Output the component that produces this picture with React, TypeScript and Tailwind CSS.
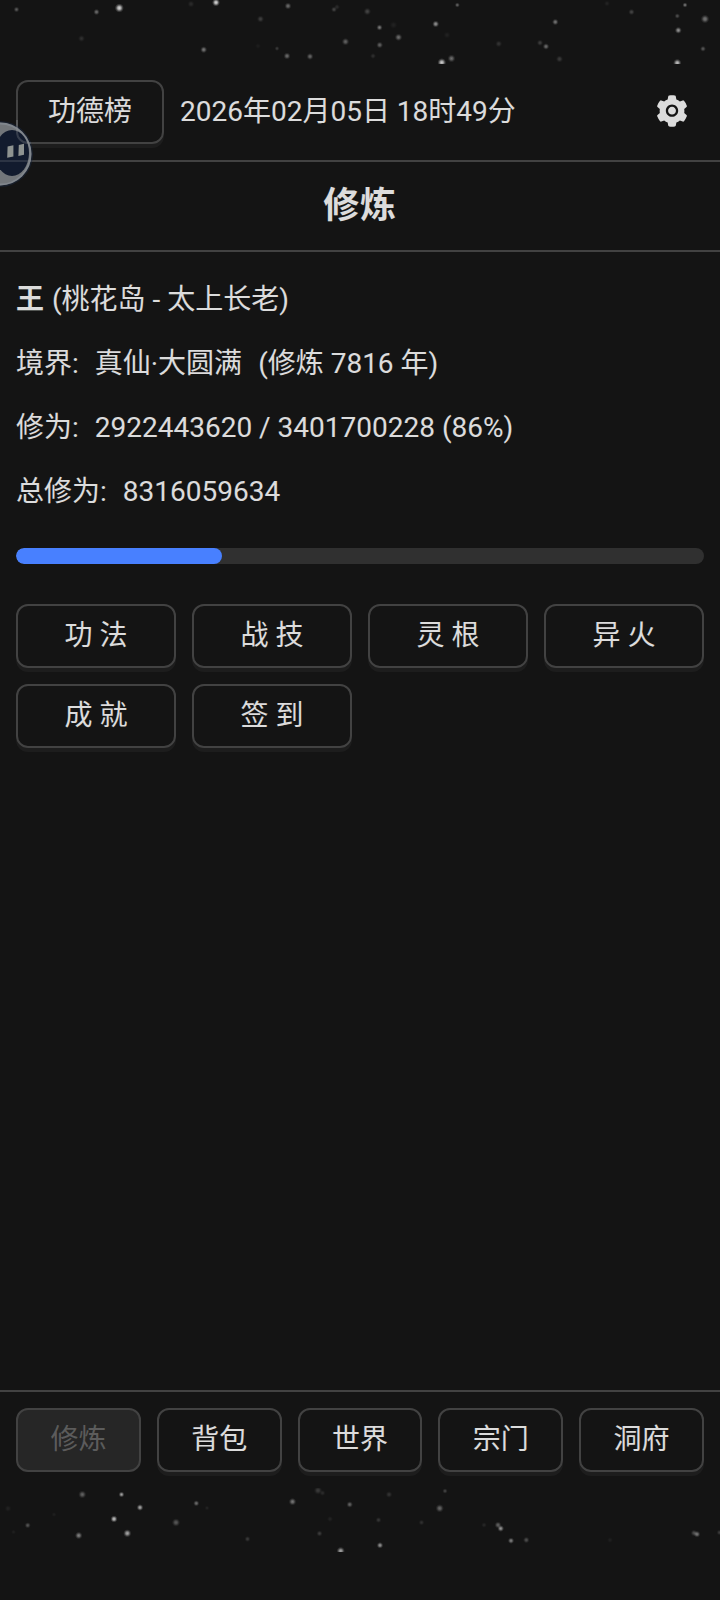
import { useState } from 'react';
import { AiFillSetting } from 'react-icons/ai';

// x, y, radius, brightness
type Star = [number, number, number, number];

const topStars: Star[] = [
    [16.5, 9.5, 3, 0.35], [96.5, 12, 3.2, 0.45], [119.3, 8, 4.6, 1], [81.5, 38.5, 3.5, 0.14],
    [191, 4, 3.5, 0.12], [216, 2.5, 4, 1], [203.7, 49.7, 3.5, 0.5], [260.5, 19, 3.6, 0.22],
    [288, 6, 3.5, 0.45], [277, 48.5, 2.5, 0.2], [287, 56, 3.5, 0.45], [310, 56.5, 3.5, 0.42],
    [334, 9.5, 3, 0.25], [337, 7, 3, 0.12], [345.5, 41.7, 3.8, 0.4], [258, 46, 3, 0.05],
    [367.3, 11.5, 3.8, 0.25], [379.5, 27.5, 3.2, 0.5], [398.5, 37.3, 3.8, 0.45], [379.7, 45, 3.4, 0.4],
    [373, 56, 3, 0.14], [393.5, 25, 4, 0.07], [435.7, 24, 3.5, 0.65], [457.3, 5, 2.6, 0.4],
    [447, 35, 3.5, 0.07], [441.8, 62.5, 4.4, 0.95], [451.5, 58.5, 4, 0.45], [498.7, 43.8, 3.5, 0.16],
    [555.3, 22, 3.3, 0.5], [540, 42.8, 3.2, 0.22], [546, 46.5, 3.3, 0.45], [559.5, 59, 3.6, 0.2],
    [607, 3.5, 3, 0.08], [631.5, 12, 3.2, 0.25], [685, 5, 2.6, 0.5], [677.3, 16, 2.8, 0.3],
    [678.3, 30.3, 3.5, 0.65], [705, 19, 4.4, 0.5], [703, 48.8, 3, 0.35], [677.3, 63, 4.2, 0.9],
];

const bottomStars: Star[] = [
    [8, 20.5, 3.5, 0.07], [27.7, 37.3, 3.1, 0.33], [13.5, 44, 2.5, 0.06], [82.3, 6.5, 4, 0.4],
    [54, 26.5, 2.5, 0.06], [121.5, 6.5, 3, 0.7], [140, 19.5, 3.4, 0.75], [114, 31, 3.6, 0.9],
    [78.7, 47.5, 3.8, 0.55], [127.3, 45.3, 4.1, 0.75], [196.3, 15.3, 3.1, 0.45], [207, 20, 2.5, 0.08],
    [176, 34.5, 4.2, 0.35], [247.5, 51, 3, 0.2], [292.5, 13.7, 3.8, 0.5], [318, 2.5, 4.2, 0.2],
    [322.5, 5, 3, 0.12], [349.7, 16.5, 3.3, 0.4], [330, 31, 3, 0.08], [319.5, 45.5, 3.2, 0.2],
    [340.7, 63, 4.2, 0.75], [389, 6.5, 3.4, 0.16], [445, 3, 2.7, 0.25], [439.7, 20.3, 4.2, 0.42],
    [378.5, 32, 3, 0.18], [421.5, 34.5, 3, 0.14], [380, 57.3, 3.3, 0.65], [484, 37, 2.8, 0.1],
    [498, 37, 3.5, 0.4], [500.7, 40.5, 3.4, 0.65], [511, 52.7, 3.2, 0.55], [526.3, 52, 3.3, 0.3],
    [610, 52, 3, 0.06], [694, 45, 3.3, 0.3], [697, 46.2, 3.4, 0.5], [719.5, 44.5, 3, 0.2],
];

function StarStrip({ id, stars }: { id: string; stars: Star[] }) {
    return (
        <svg className="block h-16 w-full shrink-0" viewBox="0 0 720 64">
            <defs>
                <radialGradient id={id}>
                    <stop offset="0" stopColor="#fff" stopOpacity="0.95" />
                    <stop offset="0.35" stopColor="#fff" stopOpacity="0.7" />
                    <stop offset="0.7" stopColor="#fff" stopOpacity="0.22" />
                    <stop offset="1" stopColor="#fff" stopOpacity="0" />
                </radialGradient>
            </defs>
            {stars.map(([x, y, r, o]) => (
                <circle key={`${x}-${y}`} cx={x} cy={y} r={r} opacity={o * 0.9} fill={`url(#${id})`} />
            ))}
        </svg>
    );
}

const actions = ['功 法', '战 技', '灵 根', '异 火', '成 就', '签 到'];
const tabs = ['修炼', '背包', '世界', '宗门', '洞府'];

const buttonClass =
    'h-16 rounded-xl border-2 border-[#424242] text-center enabled:shadow-[0_4px_0_rgba(255,255,255,0.04)] disabled:bg-white/8 disabled:text-white/25';

export default function App() {
    const [tab, setTab] = useState('修炼');
    const progress = 30;

    return (
        <div className="relative flex h-[1600px] w-[720px] flex-col overflow-hidden bg-[#141414] font-[Roboto,'Noto_Sans_CJK_SC',sans-serif] text-[28px] leading-[44px] text-white/85">
            <StarStrip id="star-top" stars={topStars} />

            {/* Header */}
            <header className="flex h-[98px] shrink-0 items-center gap-4 border-b-2 border-[#424242] px-4">
                <button className={`${buttonClass} w-[148px]`}>功德榜</button>
                <span>2026年02月05日 18时49分</span>
                <button className="ml-auto flex size-16 items-center justify-center pb-0.5">
                    <AiFillSetting className="size-9" />
                </button>
            </header>

            <h1 className="flex h-[90px] shrink-0 items-center justify-center border-b-2 border-[#424242] text-[36px] font-bold tracking-[0.75px]">
                {tab}
            </h1>

            {/* Character */}
            <main className="flex grow flex-col px-4 pt-[26px]">
                <div className="flex flex-col gap-5">
                    <p>
                        <strong className="tracking-[1px]">王</strong> (桃花岛 - 太上长老)
                    </p>
                    <p className="flex gap-4">
                        <span>境界:</span>
                        <span>真仙·大圆满</span>
                        <span>(修炼 7816 年)</span>
                    </p>
                    <p className="flex gap-4">
                        <span>修为:</span>
                        <span>2922443620 / 3401700228 (86%)</span>
                    </p>
                    <p className="flex gap-4">
                        <span>总修为:</span>
                        <span>8316059634</span>
                    </p>
                </div>

                <div className="mt-[34px] h-4 overflow-hidden rounded-full bg-[#303030]">
                    <div className="h-full rounded-full bg-[#4880ff]" style={{ width: `${progress}%` }} />
                </div>

                <div className="mt-10 grid grid-cols-4 gap-4">
                    {actions.map((label) => (
                        <button key={label} className={buttonClass}>
                            {label}
                        </button>
                    ))}
                </div>
            </main>

            {/* Bottom tabs */}
            <nav className="grid h-[98px] shrink-0 grid-cols-5 gap-4 border-t-2 border-[#424242] px-4 pt-4">
                {tabs.map((label) => (
                    <button
                        key={label}
                        className={buttonClass}
                        disabled={label === tab}
                        onClick={() => setTab(label)}
                    >
                        {label}
                    </button>
                ))}
            </nav>

            <StarStrip id="star-bottom" stars={bottomStars} />
            <div className="h-12 shrink-0" />

            {/* Floating assistant */}
            <svg className="absolute top-[120px] left-0 h-[68px] w-9" viewBox="0 0 36 68">
                <circle cx="0" cy="34" r="33" fill="#1c2a42" opacity="0.5" />
                <circle cx="0" cy="34" r="31.5" fill="#7c8083" opacity="0.9" />
                <circle cx="0" cy="34" r="30.5" fill="none" stroke="#8b919a" strokeWidth="1.8" opacity="0.6" />
                <ellipse cx="12" cy="33" rx="17" ry="23" fill="#121b2e" />
                <path d="M17 0V12C17 18 22 23 28 23H31" fill="none" stroke="#8b8f93" strokeWidth="2" opacity="0.3" />
                <path d="M7.6 26.4 13.4 25.2V36.4L7.2 37.8ZM18.8 25 24 23.8V34.8L18.4 36Z" fill="#8e9391" />
                <path d="M0 41H31" stroke="#8b8f93" strokeWidth="2" opacity="0.22" />
            </svg>
        </div>
    );
}
